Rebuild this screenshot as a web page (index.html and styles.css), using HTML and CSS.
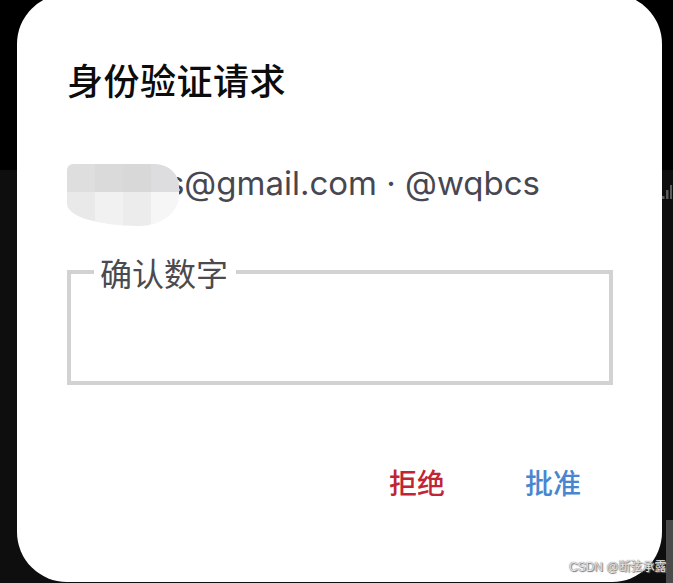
FILE: index.html
```html
<!DOCTYPE html>
<html lang="zh-CN">
<head>
<meta charset="utf-8">
<link rel="stylesheet" href="styles.css">
</head>
<body>
<div class="screen">
  <div class="dialog">
    <h1 class="title">身份验证请求</h1>
    <div class="account">
      <span class="account-text">wqbcs@gmail.com · @wqbcs</span>
      <div class="mosaic">
        <span class="m1"></span><span class="m2"></span><span class="m3"></span><span class="m4"></span>
        <span class="m5"></span><span class="m6"></span><span class="m7"></span><span class="m8"></span>
      </div>
    </div>
    <fieldset class="field">
      <legend class="field-label">确认数字</legend>
    </fieldset>
    <div class="actions">
      <button class="btn btn-deny">拒绝</button>
      <button class="btn btn-approve">批准</button>
    </div>
  </div>
  <svg class="signal" width="10" height="18" viewBox="0 0 10 18">
    <rect x="0" y="12" width="2.5" height="3" fill="#5c5c5c"/>
    <rect x="4" y="6" width="2.5" height="9" fill="#5c5c5c"/>
    <rect x="8" y="1" width="2.5" height="14" fill="#5c5c5c"/>
  </svg>
  <div class="edge"></div>
  <div class="watermark">CSDN @断弦承露</div>
</div>
</body>
</html>
```
FILE: styles.css
```css
html, body {
  margin: 0;
  padding: 0;
}
body {
  width: 673px;
  height: 583px;
  overflow: hidden;
  background: linear-gradient(#000 0, #000 170px, #0e0e0e 170px);
  font-family: "Noto Sans CJK SC", sans-serif;
}
.screen {
  position: relative;
  width: 673px;
  height: 583px;
  overflow: hidden;
}
.dialog {
  margin: -6px 0 0 17px;
  width: 645px;
  height: 588px;
  box-sizing: border-box;
  background: #fff;
  border-radius: 50px;
  padding: 60px 50px 0 50px;
  display: flex;
  flex-direction: column;
}
.title {
  margin: 0;
  font-size: 36px;
  line-height: 50px;
  font-weight: 500;
  color: #0c0c0c;
  letter-spacing: 0.5px;
}
.account {
  position: relative;
  margin-top: 56px;
  height: 46px;
}
.account-text {
  position: absolute;
  right: 72px;
  top: 0;
  font-family: "Inter", "Roboto", sans-serif;
  font-size: 33px;
  line-height: 46px;
  color: #474752;
  white-space: nowrap;
}
.mosaic {
  position: absolute;
  left: 0;
  top: 4px;
  width: 112px;
  height: 62px;
  display: grid;
  grid-template-columns: repeat(4, 28px);
  grid-template-rows: 28px 34px;
  border-radius: 6px 24px 40px 70px / 6px 22px 30px 22px;
  overflow: hidden;
}
.mosaic span { display: block; }
.m1 { background: #dedede; }
.m2 { background: #dadada; }
.m3 { background: #d8d8d9; }
.m4 { background: #dddddf; }
.m5 { background: #e9e9e9; }
.m6 { background: #f1f1f1; }
.m7 { background: #ececec; }
.m8 { background: #f6f6f6; }
.field {
  margin: 49px 0 0 0;
  padding: 0 0 0 23px;
  width: 546px;
  height: 130px;
  box-sizing: border-box;
  border: 4px solid #d2d2d2;
  min-width: 0;
}
.field-label {
  padding: 0 8px 0 6px;
  font-size: 32px;
  line-height: 34px;
  color: #4a4a4f;
}
.actions {
  display: flex;
  justify-content: flex-end;
  gap: 80px;
  margin-top: 80px;
  padding-right: 31px;
}
.btn {
  border: 0;
  background: none;
  padding: 0;
  font-family: "Noto Sans CJK SC", sans-serif;
  font-size: 28px;
  line-height: 34px;
  font-weight: 500;
  cursor: pointer;
}
.btn-deny { color: #c02535; }
.btn-approve { color: #4a86cf; }
.signal {
  position: absolute;
  left: 662px;
  top: 184px;
}
.edge {
  position: absolute;
  left: 666px;
  top: 520px;
  width: 7px;
  height: 63px;
  background: #4a4a4a;
}
.watermark {
  position: absolute;
  left: 569px;
  top: 558px;
  font-family: "Liberation Sans", "Noto Sans CJK SC", sans-serif;
  font-size: 12px;
  line-height: 18px;
  color: #e6e6e6;
  text-shadow: 0 0 1px #555, 1px 1px 1px #777;
  white-space: nowrap;
}
```
